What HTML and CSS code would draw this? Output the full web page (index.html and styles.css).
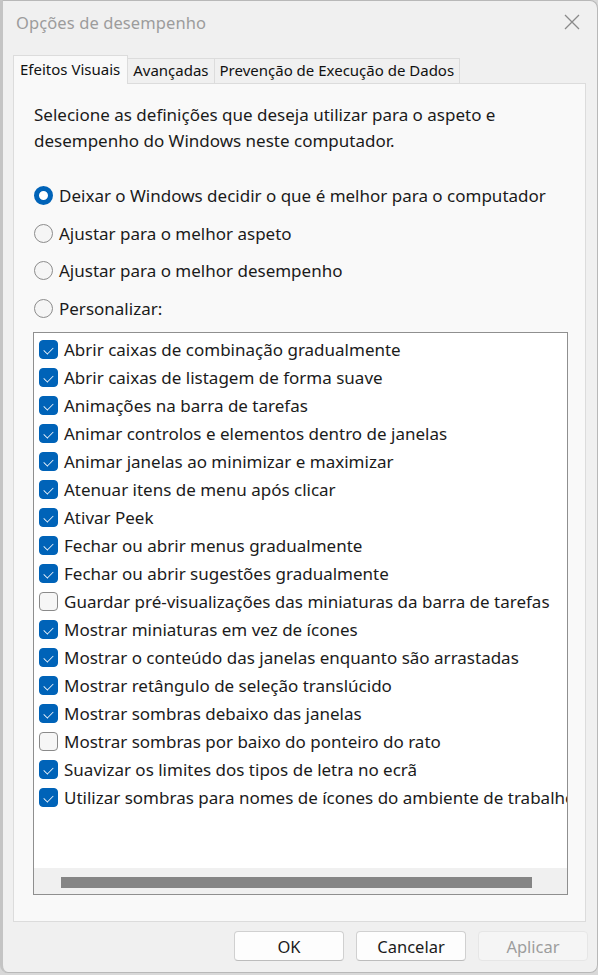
FILE: index.html
```html
<!DOCTYPE html>
<html lang="pt">
<head>
<meta charset="utf-8">
<title>Opções de desempenho</title>
<link rel="stylesheet" href="styles.css">
</head>
<body>
<div class="window">
  <div class="titlebar">
    <span class="title">Opções de desempenho</span>
    <span class="close"><svg width="16" height="16" viewBox="0 0 16 16"><path d="M1 1L15 15M15 1L1 15" stroke="#8a8a8a" stroke-width="1.3" fill="none"/></svg></span>
  </div>
  <div class="tabs">
    <span class="tab active">Efeitos Visuais</span>
    <span class="tab">Avançadas</span>
    <span class="tab">Prevenção de Execução de Dados</span>
  </div>
  <div class="panel">
    <p class="intro">Selecione as definições que deseja utilizar para o aspeto e<br>desempenho do Windows neste computador.</p>
    <div class="radios">
      <div class="radio-row"><span class="radio checked"></span>Deixar o Windows decidir o que é melhor para o computador</div>
      <div class="radio-row"><span class="radio"></span>Ajustar para o melhor aspeto</div>
      <div class="radio-row"><span class="radio"></span>Ajustar para o melhor desempenho</div>
      <div class="radio-row"><span class="radio"></span>Personalizar:</div>
    </div>
    <div class="listbox">
      <ul class="items">
        <li><span class="cb on"></span>Abrir caixas de combinação gradualmente</li>
        <li><span class="cb on"></span>Abrir caixas de listagem de forma suave</li>
        <li><span class="cb on"></span>Animações na barra de tarefas</li>
        <li><span class="cb on"></span>Animar controlos e elementos dentro de janelas</li>
        <li><span class="cb on"></span>Animar janelas ao minimizar e maximizar</li>
        <li><span class="cb on"></span>Atenuar itens de menu após clicar</li>
        <li><span class="cb on"></span>Ativar Peek</li>
        <li><span class="cb on"></span>Fechar ou abrir menus gradualmente</li>
        <li><span class="cb on"></span>Fechar ou abrir sugestões gradualmente</li>
        <li><span class="cb"></span>Guardar pré-visualizações das miniaturas da barra de tarefas</li>
        <li><span class="cb on"></span>Mostrar miniaturas em vez de ícones</li>
        <li><span class="cb on"></span>Mostrar o conteúdo das janelas enquanto são arrastadas</li>
        <li><span class="cb on"></span>Mostrar retângulo de seleção translúcido</li>
        <li><span class="cb on"></span>Mostrar sombras debaixo das janelas</li>
        <li><span class="cb"></span>Mostrar sombras por baixo do ponteiro do rato</li>
        <li><span class="cb on"></span>Suavizar os limites dos tipos de letra no ecrã</li>
        <li><span class="cb on"></span>Utilizar sombras para nomes de ícones do ambiente de trabalho</li>
      </ul>
      <div class="hscroll"><div class="thumb"></div></div>
    </div>
  </div>
  <div class="buttons">
    <span class="btn">OK</span>
    <span class="btn">Cancelar</span>
    <span class="btn disabled">Aplicar</span>
  </div>
</div>
</body>
</html>
```
FILE: styles.css
```css
* { box-sizing: border-box; }
html, body { margin: 0; padding: 0; }
body {
  width: 598px;
  height: 975px;
  background: #d8d8d8;
  font-family: "Noto Sans", "Open Sans", sans-serif;
  color: #1b1b1b;
  overflow: hidden;
}
.window {
  width: 598px;
  height: 973px;
  background: #f0f0f0;
  border: 1px solid #b8b8b8;
  border-left: 3px solid #c4c4c4;
  border-radius: 0 8px 8px 8px;
  display: flex;
  flex-direction: column;
  overflow: hidden;
}
.titlebar {
  height: 44px;
  display: flex;
  align-items: center;
  justify-content: space-between;
  padding: 0 17px 0 13px;
}
.title {
  font-size: 16.5px;
  color: #9c9c9c;
  letter-spacing: 0.1px;
  margin-top: -2px;
}
.close { display: flex; width: 16px; height: 16px; margin-top: -2px; }
.tabs {
  display: flex;
  align-items: flex-end;
  height: 38px;
  padding: 10px 0 0 10px;
  position: relative;
  z-index: 1;
}
.tab {
  height: 25px;
  padding: 0 5px 0 5px;
  font-size: 15px;
  line-height: 22px;
  border: 1px solid #dcdcdc;
  border-bottom: none;
  border-left: none;
  background: #f0f0f0;
  color: #111;
}
.tab.active {
  height: 29px;
  line-height: 26px;
  background: #f9f9f9;
  border-left: 1px solid #dcdcdc;
  padding: 0 7px 0 6px;
  margin-bottom: -1px;
}
.panel {
  margin: 0 11px 0 10px;
  height: 839px;
  background: #f9f9f9;
  border: 1px solid #dcdcdc;
  padding: 18px 0 0 20px;
}
.intro {
  margin: 0;
  font-size: 17px;
  line-height: 26px;
}
.radios {
  margin-top: 23px;
  display: flex;
  flex-direction: column;
}
.radio-row {
  height: 37.5px;
  display: flex;
  align-items: center;
  font-size: 17px;
}
.radio {
  width: 19px;
  height: 19px;
  border-radius: 50%;
  border: 1px solid #8c8c8c;
  background: #f5f5f5;
  margin-right: 6px;
  flex: none;
}
.radio.checked {
  border: 5px solid #0063b8;
  background: #fff;
}
.listbox {
  margin: 5px 0 0 -1px;
  width: 535px;
  height: 563px;
  background: #fff;
  border: 1px solid #8f8f8f;
  display: flex;
  flex-direction: column;
  justify-content: space-between;
}
.items {
  list-style: none;
  margin: 0;
  padding: 2px 0 0 5px;
  white-space: nowrap;
  overflow: hidden;
}
.items li {
  height: 28px;
  display: flex;
  align-items: center;
  font-size: 17px;
}
.cb {
  width: 19px;
  height: 19px;
  border-radius: 4px;
  border: 1px solid #8a8a8a;
  background: #f6f6f6;
  margin-right: 6px;
  flex: none;
  position: relative;
}
.cb.on {
  background: #0063b8;
  border-color: #0063b8;
}
.cb.on::after {
  content: "";
  position: absolute;
  left: 5px;
  top: 3px;
  width: 6px;
  height: 10px;
  border: solid #fff;
  border-width: 0 1.3px 1.3px 0;
  transform: rotate(45deg) scale(0.8);
}
.hscroll {
  height: 26px;
  background: #f0f0f0;
  padding: 9px 35px 0 27px;
  flex: none;
}
.thumb {
  height: 11px;
  background: #858585;
}
.buttons {
  display: flex;
  justify-content: flex-end;
  gap: 12px;
  padding: 9px 9px 0 0;
}
.btn {
  width: 110px;
  height: 30px;
  border: 1px solid #d0d0d0;
  border-bottom-color: #bcbcbc;
  border-radius: 4px;
  background: #fdfdfd;
  font-size: 16.5px;
  display: flex;
  align-items: center;
  justify-content: center;
  color: #1b1b1b;
}
.btn.disabled {
  background: #f5f5f5;
  border-color: #e6e6e6;
  color: #9d9d9d;
}
```
